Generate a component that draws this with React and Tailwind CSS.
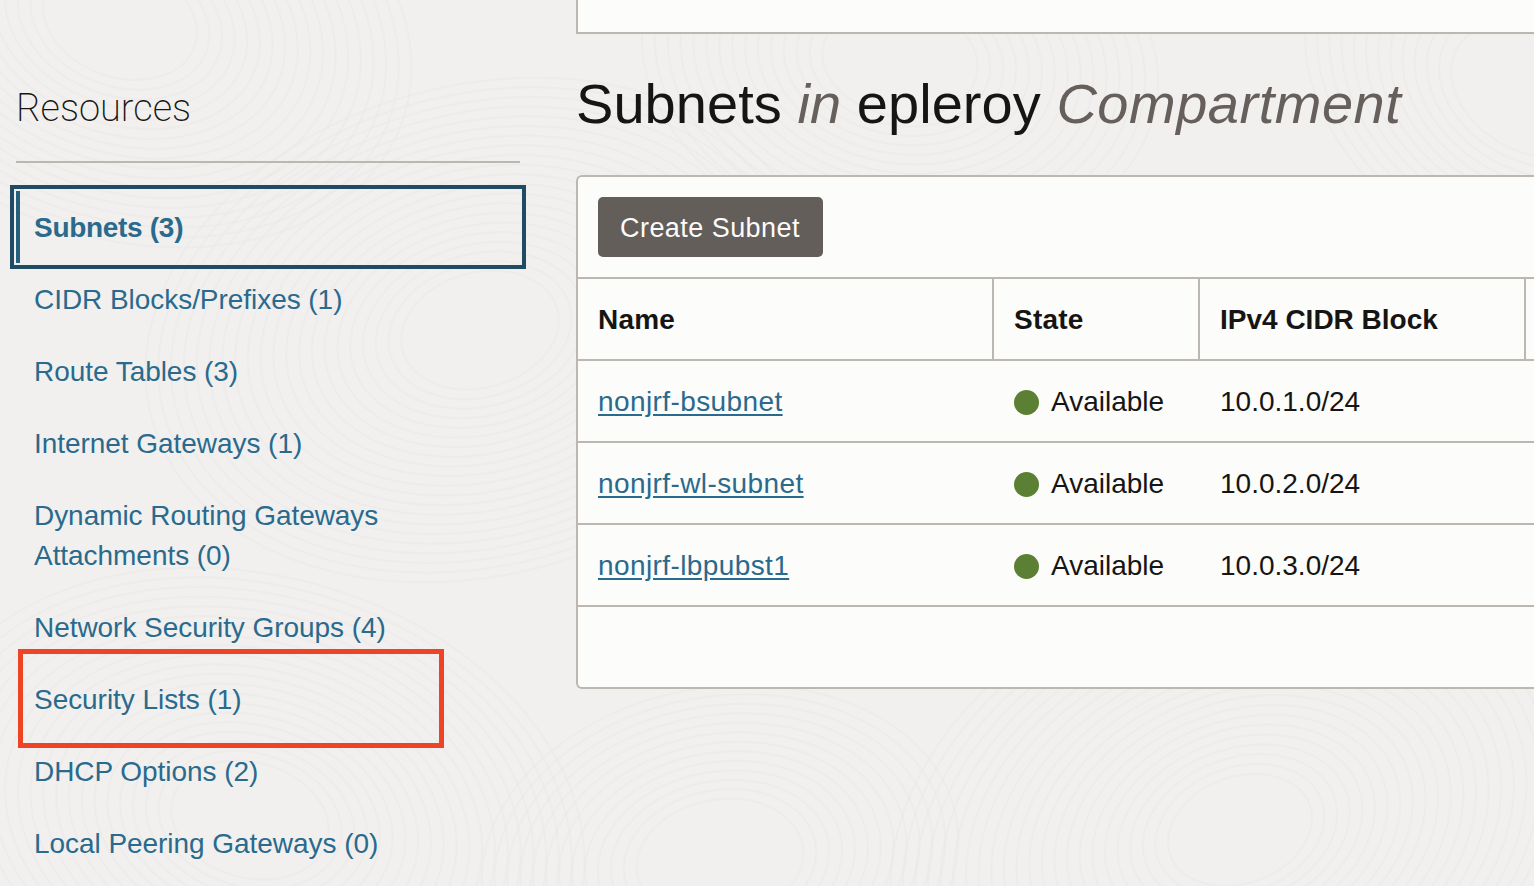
const resources = [
  "CIDR Blocks/Prefixes (1)",
  "Route Tables (3)",
  "Internet Gateways (1)",
  "Dynamic Routing Gateways Attachments (0)",
  "Network Security Groups (4)",
  "Security Lists (1)",
  "DHCP Options (2)",
  "Local Peering Gateways (0)",
];

const subnets = [
  { name: "nonjrf-bsubnet", cidr: "10.0.1.0/24" },
  { name: "nonjrf-wl-subnet", cidr: "10.0.2.0/24" },
  { name: "nonjrf-lbpubst1", cidr: "10.0.3.0/24" },
];

// faint fingerprint swirls behind the page
const swirls = [
  [120, 20, 300, 20],
  [480, 330, 340, -15],
  [900, 60, 260, 10],
  [1240, 830, 360, -20],
  [250, 820, 340, 15],
  [1530, 90, 240, 30],
  [720, 860, 240, -10],
];

function Texture() {
  return (
    <svg className="absolute inset-0" width="1534" height="886" fill="none" stroke="#e8e7e5" strokeWidth="2">
      {swirls.map(([cx, cy, r, rot]) =>
        Array.from({ length: Math.floor((r - 60) / 13) }, (_, i) => (
          <ellipse
            key={`${cx}-${i}`}
            cx={cx}
            cy={cy}
            rx={r - i * 13}
            ry={(r - i * 13) * 0.72}
            transform={`rotate(${rot} ${cx} ${cy})`}
            opacity="0.4"
          />
        ))
      )}
    </svg>
  );
}

function Sidebar() {
  return (
    <aside className="w-[504px] ml-4 mr-14 shrink-0">
      <h2 className="h-[163px] box-border pt-[85px] text-[38px] leading-[46px] font-[200] tracking-[0px] text-[#161513] font-['Roboto',sans-serif] border-b-2 border-[#bcb7b0]">
        Resources
      </h2>
      <ul className="mt-[28px] text-[28px] leading-[40px] tracking-[-0.05px] text-[#2a6a8c]">
        <li className="h-[72px] flex items-center pl-[14px] pt-0.5 border-l-4 border-[#27607d] font-bold tracking-[-0.3px] outline-4 outline-offset-2 outline-[#1f4b63] mb-px">
          Subnets (3)
        </li>
        {resources.map((r) => (
          <li key={r} className="py-4 pl-[18px] pr-[120px]">
            {r}
          </li>
        ))}
      </ul>
    </aside>
  );
}

function SubnetsCard() {
  return (
    <div className="mt-[38px] h-[514px] w-[1100px] rounded-l-md border-2 border-r-0 border-[#bcb7b0] bg-[#fcfcfb]">
      <div className="h-[102px] pt-[20px] pl-5 border-b-2 border-[#bcb7b0]">
        <button className="h-[60px] w-[225px] rounded-[5px] bg-[#635e5a] text-left pl-[22px] pt-0.5 text-[27px] tracking-[0.45px] text-[#fcfbfa]">
          Create Subnet
        </button>
      </div>
      <table className="table-fixed border-collapse text-[28px] text-[#161513]">
        <colgroup>
          <col className="w-[415px]" />
          <col className="w-[206px]" />
          <col className="w-[326px]" />
          <col className="w-[150px]" />
        </colgroup>
        <thead>
          <tr className="h-[81px] border-b-2 border-[#bcb7b0] font-bold">
            <th className="pl-5 pt-0.5 text-left tracking-[0.2px] border-r-2 border-[#bcb7b0]">Name</th>
            <th className="pl-5 pt-0.5 text-left tracking-[0.2px] border-r-2 border-[#bcb7b0]">State</th>
            <th className="pl-5 pt-0.5 text-left border-r-2 border-[#bcb7b0]">IPv4 CIDR Block</th>
            <th></th>
          </tr>
        </thead>
        <tbody>
          {subnets.map((s) => (
            <tr key={s.name} className="h-[82px] border-b-2 border-[#bcb7b0]">
              <td className="pl-5 pt-0.5">
                <a href="#" className="text-[#2a6a8c] tracking-[0.4px] underline underline-offset-[3px]">
                  {s.name}
                </a>
              </td>
              <td className="pl-[21px] pt-0.5">
                <span className="flex items-center gap-3">
                  <span className="w-[25px] h-[25px] rounded-full bg-[#5c8033]"></span>
                  Available
                </span>
              </td>
              <td className="pl-[21px] pt-0.5" colSpan={2}>
                {s.cidr}
              </td>
            </tr>
          ))}
        </tbody>
      </table>
    </div>
  );
}

export default function App() {
  return (
    <div className="relative w-[1534px] h-[886px] overflow-hidden bg-[#f1f0ef] font-['Liberation_Sans',Arial,sans-serif]">
      <Texture />
      <div className="relative flex">
        <Sidebar />
        <main className="flex-1 min-w-0 overflow-hidden">
          <div className="h-[34px] border-l-2 border-b-2 border-[#bcb7b0] bg-[#fcfcfb]"></div>
          <h1 className="mt-[37px] text-[56px] leading-[66px] tracking-[0.05px] text-[#161513] whitespace-nowrap">
            Subnets <em className="text-[#665f5b]">in</em> epleroy <em className="text-[#665f5b] tracking-[0.52px]">Compartment</em>
          </h1>
          <SubnetsCard />
        </main>
      </div>
      {/* red annotation box around the Security Lists row */}
      <div className="absolute left-[18px] top-[649px] w-[426px] h-[99px] border-[5px] border-[#ee4325]"></div>
    </div>
  );
}
